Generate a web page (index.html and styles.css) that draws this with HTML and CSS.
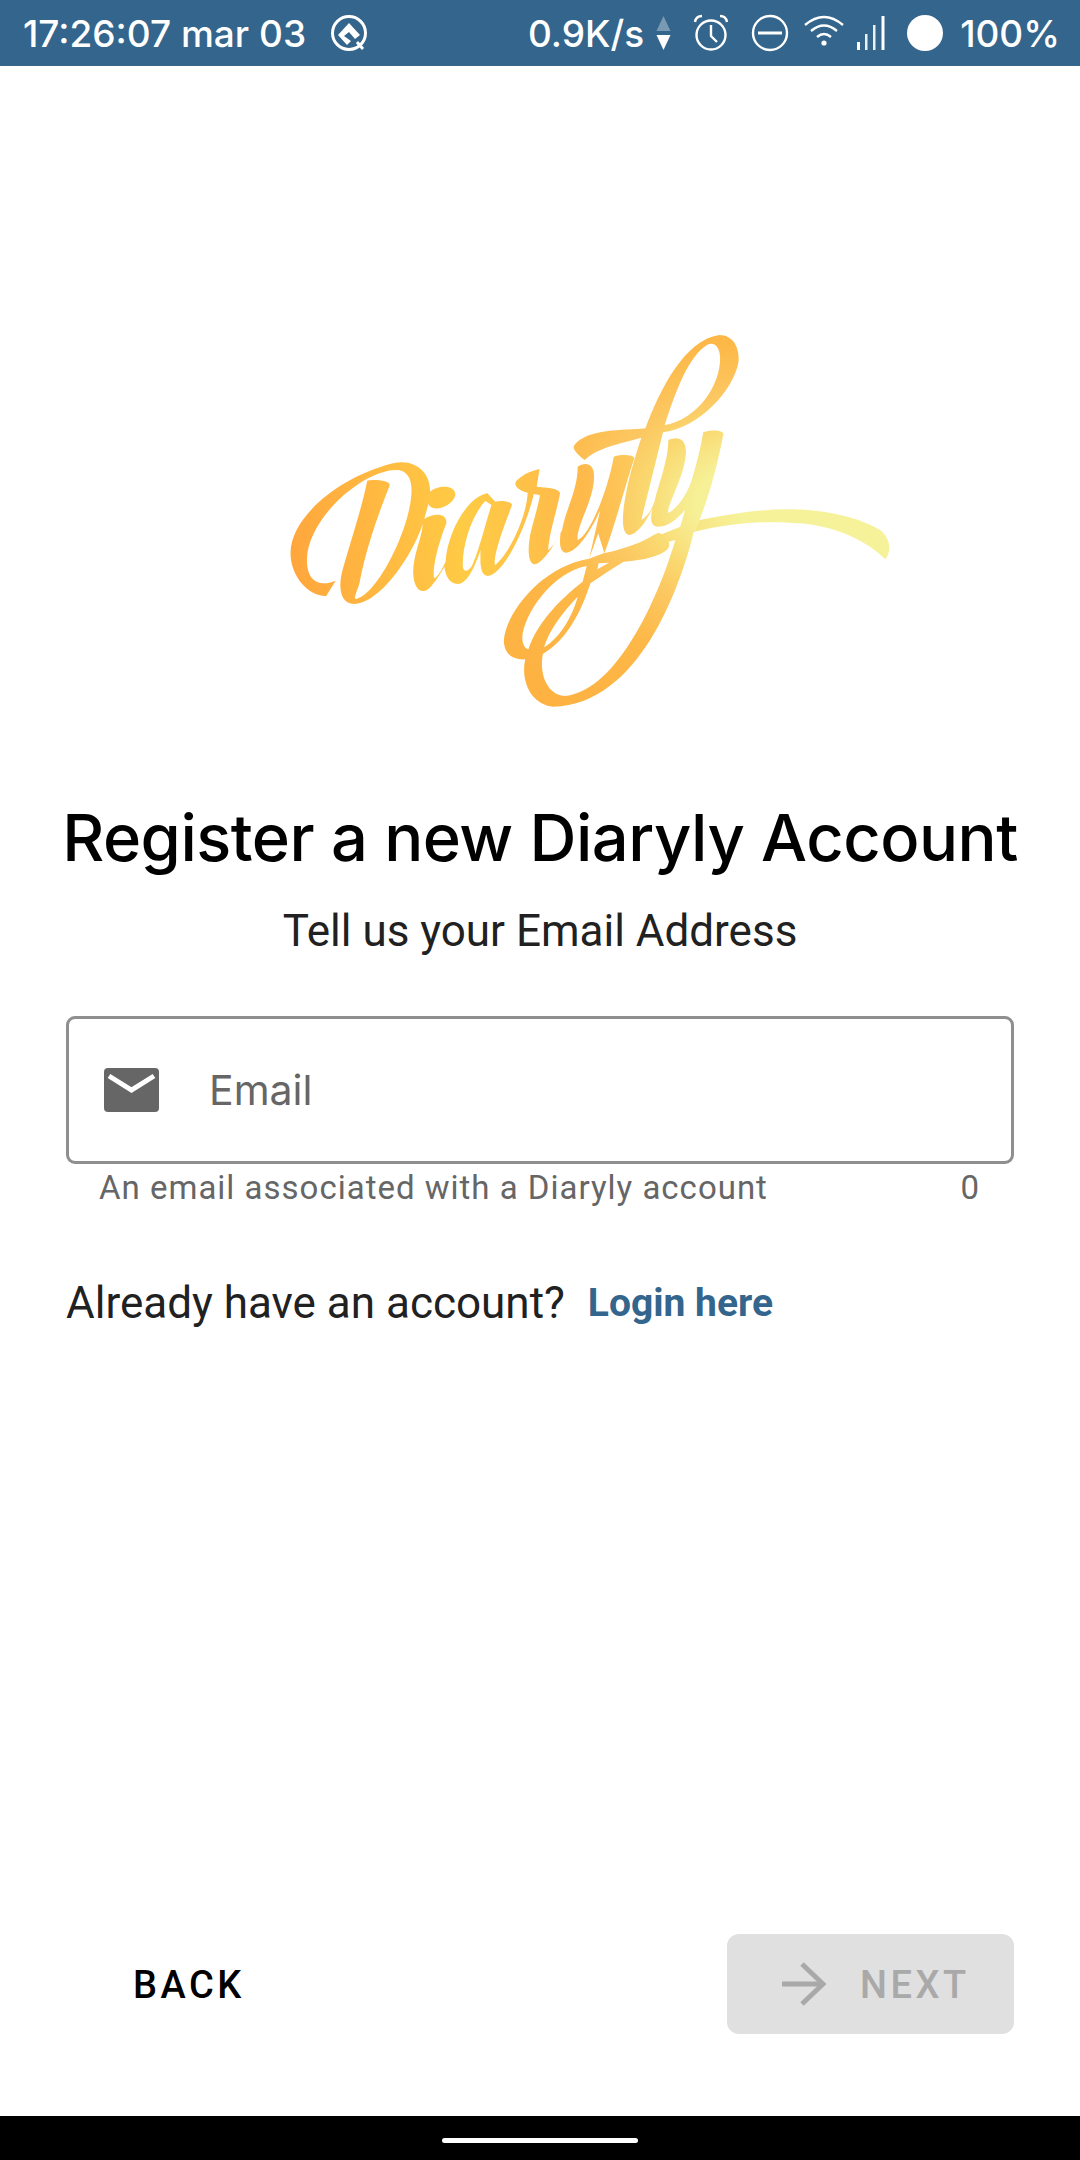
FILE: index.html
```html
<!DOCTYPE html>
<html lang="en">
<head>
  <meta charset="UTF-8" />
  <meta name="viewport" content="width=device-width, initial-scale=1.0"/>
  <title>Diaryly - Register</title>
  <link rel="stylesheet" href="styles.css">
</head>
<body>
  <div class="screen">
    <div class="statusbar">
      <div class="status-left">
        <span>17:26:07 mar 03</span>
        <svg class="ic-q" viewBox="0 0 38 38">
          <circle cx="19" cy="19" r="16.5" fill="none" stroke="#fff" stroke-width="3"/>
          <path d="M19 9 L30 21 L25 25 L19 18 L14 22 L21 27 L17 31 L8 21 Z" fill="#fff"/>
          <path d="M27 28 L33 35" stroke="#fff" stroke-width="3"/>
        </svg>
      </div>
      <div class="status-right">
        <span>0.9K/s</span>
        <svg class="ic-arrows" viewBox="0 0 15 34">
          <path d="M7.5 0 L14.5 15 H0.5 Z" fill="#fff" opacity="0.35"/>
          <path d="M0.5 19 H14.5 L7.5 34 Z" fill="#fff"/>
        </svg>
        <svg class="ic-alarm" viewBox="0 0 36 38" fill="none" stroke="#fff" stroke-width="2.4">
          <circle cx="18" cy="21" r="14.5"/>
          <path d="M18 11 V22 L24 28"/>
          <path d="M2 8 Q3 2 9 2 M27 2 Q33 2 34 8"/>
        </svg>
        <svg class="ic-dnd" viewBox="0 0 38 38" fill="none" stroke="#fff" stroke-width="2.4">
          <circle cx="19" cy="19" r="17"/>
          <path d="M7 19 H31" stroke-width="3"/>
        </svg>
        <svg class="ic-wifi" viewBox="0 0 40 32" fill="none" stroke="#fff" stroke-width="2.4">
          <path d="M1 11 Q20 -5 39 11"/>
          <path d="M7 17 Q20 6 33 17"/>
          <path d="M13 23 Q20 17 27 23"/>
          <circle cx="20" cy="29" r="2.6" fill="#fff" stroke="none"/>
        </svg>
        <svg class="ic-signal" viewBox="0 0 28 34" fill="#fff">
          <rect x="0" y="26" width="3" height="8"/>
          <rect x="8" y="18" width="2.5" height="16" opacity="0.9"/>
          <rect x="16" y="9" width="2.5" height="25" opacity="0.9"/>
          <rect x="24.500" y="0" width="3" height="34"/>
        </svg>
        <span class="battery-dot"></span>
        <span>100%</span>
      </div>
    </div>

    <div class="logo-wrap">
      <svg class="logo" viewBox="0 0 1560 1200" preserveAspectRatio="none" role="img" aria-label="Diaryly logo">
        <defs>
          <linearGradient id="warm" gradientUnits="userSpaceOnUse" x1="50" y1="700" x2="900" y2="640">
            <stop offset="0" stop-color="#ffa63d"/>
            <stop offset="0.5" stop-color="#ffcb45"/>
            <stop offset="0.85" stop-color="#feb94b"/>
            <stop offset="1" stop-color="#fdc95c"/>
          </linearGradient>
          <radialGradient id="swash" gradientUnits="userSpaceOnUse" cx="1150" cy="550" r="800">
            <stop offset="0.14" stop-color="#f6f096"/>
            <stop offset="0.22" stop-color="#f8e585"/>
            <stop offset="0.3" stop-color="#fad86f"/>
            <stop offset="0.4" stop-color="#fcc862"/>
            <stop offset="0.6" stop-color="#fdb847"/>
            <stop offset="1" stop-color="#fdb141"/>
          </radialGradient>
          <linearGradient id="tail" gradientUnits="userSpaceOnUse" x1="1000" y1="640" x2="1150" y2="600">
            <stop offset="0" stop-color="#f9e07c"/>
            <stop offset="1" stop-color="#f6f299"/>
          </linearGradient>
        </defs>
        <g fill="url(#warm)">
          <path d="M160 782 L137 828 C95 830 50 770 50 700 C50 590 170 470 300 430 C355 415 392 460 390 515 C405 497 452 490 452 525 C445 560 395 580 386 552 L376 597 C395 580 432 575 430 610 C410 670 395 745 400 775 C410 770 420 745 428 725 C432 640 480 530 530 520 L549 545 C565 540 590 545 590 555 C570 620 545 700 548 735 C575 715 625 600 628 518 C600 510 590 490 605 478 C620 460 640 452 657 447 L650 500 C670 503 705 503 707 520 C700 570 680 640 678 690 C690 680 702 655 712 630 C720 570 750 510 750 440 C765 428 790 425 790 470 C790 540 745 620 750 660 C775 650 820 530 838 410 C850 403 888 403 888 415 C860 520 840 620 815 700 L800 640 L778 716 L805 570 C780 640 745 700 720 698 C705 695 706 665 708 640 C690 680 665 730 645 733 C625 730 630 670 635 640 C645 590 660 530 657 525 L643 522 C625 620 570 765 530 768 C510 765 513 720 513 690 C500 740 480 792 458 792 C435 790 428 765 425 740 C410 770 390 815 372 813 C350 810 345 760 352 720 C358 680 372 640 372 612 C350 700 270 850 205 852 C170 850 165 800 178 745 C195 670 225 560 237 482 C255 477 292 482 292 495 C265 580 235 680 218 790 C212 815 205 830 208 837 C260 830 345 620 345 510 C345 470 330 448 305 450 C220 455 90 600 90 720 C90 790 125 800 160 782 Z"/>
          <path d="M525 543 C495 580 468 670 470 740 C472 760 487 755 495 730 C510 690 530 590 540 555 Z" fill="#fff"/>
        </g>
        <path fill="url(#swash)" fill-rule="evenodd" d="M915 325 C950 210 1010 60 1095 45 C1130 45 1145 85 1142 125 C1130 210 1050 320 958 337 L905 600 C920 590 930 570 937 545 C950 480 971 420 971 360 C990 350 1015 350 1014 400 C1010 470 970 550 970 578 C985 575 1015 530 1028 480 C1040 430 1050 385 1056 337 C1075 328 1105 330 1105 342 C1090 440 1072 520 1047 600 L1033 636 C1000 800 900 1155 690 1160 C640 1155 610 1090 622 1018 C590 1020 570 1000 570 960 C575 880 660 740 778 716 L813 700 C870 685 910 665 935 645 L947 638 L955 643 L1000 620 L1012 570 C990 600 970 620 947 620 C925 620 928 590 932 565 C920 600 895 645 875 645 C855 640 858 580 868 520 C875 470 890 410 905 353 C860 370 800 380 767 420 C750 405 735 385 742 375 C775 325 860 332 915 325 Z M962 316 C1050 295 1100 185 1097 110 C1095 75 1080 65 1065 75 C1020 110 990 210 962 316 Z M772 738 C690 755 620 880 615 950 C615 970 620 985 630 988 C650 910 705 840 762 785 Z M801 730 L826 728 L798 748 Z M750 830 C715 875 680 930 668 982 C710 950 738 885 750 830 Z M988 660 L972 665 C976 680 970 690 955 700 C930 715 900 722 862 725 C835 745 810 765 781 790 C760 870 725 960 665 1002 C655 1070 680 1128 720 1128 C850 1110 950 820 988 660 Z"/>
        <path fill="url(#tail)" d="M1033 636 C1150 600 1230 605 1290 610 C1390 620 1460 670 1500 718 C1512 700 1517 660 1487 630 C1425 585 1335 568 1260 568 C1180 568 1110 585 1047 600 Z"/>
      </svg>
    </div>

    <h1>Register a new Diaryly Account</h1>
    <p class="subtitle">Tell us your Email Address</p>

    <div class="field">
      <svg class="ic-mail" viewBox="0 0 55 44">
        <path d="M4 0 H51 Q55 0 55 4 V40 Q55 44 51 44 H4 Q0 44 0 40 V4 Q0 0 4 0 Z" fill="#666"/>
        <path d="M5 8 L27.500 22 L50 8" fill="none" stroke="#fff" stroke-width="5"/>
      </svg>
      <span class="placeholder">Email</span>
    </div>
    <div class="hint">
      <span>An email associated with a Diaryly account</span>
      <span>0</span>
    </div>

    <div class="login-row">
      <span>Already have an account?</span>
      <a class="login-link" href="#">Login here</a>
    </div>

    <div class="actions">
      <a class="btn-back" href="#">BACK</a>
      <a class="btn-next" href="#">
        <svg class="ic-next" viewBox="0 0 44 44" fill="none" stroke="#a9a9a9" stroke-width="5">
          <path d="M0 22 H41"/>
          <path d="M20 2 L41 22 L20 42"/>
        </svg>
        <span class="next-label">NEXT</span>
      </a>
    </div>

    <div class="navbar"><span class="nav-handle"></span></div>
  </div>
</body>
</html>
```

FILE: styles.css
```css
* {
  box-sizing: border-box;
}

body {
  margin: 0;
  background: #fff;
  font-family: Roboto, sans-serif;
}

.screen {
  width: 1080px;
  height: 2160px;
  display: flex;
  flex-direction: column;
  overflow: hidden;
}

.statusbar {
  height: 66px;
  background: #34658c;
  color: #fff;
  font-family: Inter, sans-serif;
  font-size: 37px;
  font-weight: 500;
  padding: 0 20px 0 23px;
  display: flex;
  align-items: center;
  justify-content: space-between;
  flex-shrink: 0;
}

.status-left,
.status-right {
  display: flex;
  align-items: center;
}

.ic-q {
  width: 38px;
  height: 38px;
  margin-left: 24px;
}

.ic-arrows {
  width: 15px;
  height: 34px;
  margin-left: 12px;
}

.ic-alarm {
  width: 36px;
  height: 38px;
  margin-left: 22px;
}

.ic-dnd {
  width: 38px;
  height: 38px;
  margin-left: 22px;
}

.ic-wifi {
  width: 40px;
  height: 32px;
  margin-left: 15px;
  margin-top: -6px;
}

.ic-signal {
  width: 28px;
  height: 34px;
  margin-left: 13px;
}

.battery-dot {
  width: 36px;
  height: 36px;
  border-radius: 50%;
  background: #fff;
  margin: 0 17px 0 22px;
}

.logo-wrap {
  padding: 254px 0 0 270px;
  height: 654px;
  margin-bottom: 83px;
  flex-shrink: 0;
}

.logo {
  display: block;
  width: 640px;
  height: 400px;
}

h1 {
  margin: 0;
  font-family: Inter, sans-serif;
  font-size: 65px;
  font-weight: 500;
  line-height: 70px;
  color: #000;
  text-align: center;
  letter-spacing: -0.5px;
}

.subtitle {
  margin: 33px 0 0;
  font-size: 44px;
  line-height: 50px;
  color: #212121;
  text-align: center;
}

.field {
  margin: 60px 66px 0;
  height: 148px;
  border: 3px solid #8f8f8f;
  border-radius: 9px;
  display: flex;
  align-items: center;
  padding-left: 35px;
  flex-shrink: 0;
}

.ic-mail {
  width: 55px;
  height: 44px;
}

.placeholder {
  margin-left: 50px;
  font-family: Inter, sans-serif;
  font-size: 41px;
  color: #666;
}

.hint {
  margin: 5px 66px 0 99px;
  padding-right: 34px;
  display: flex;
  justify-content: space-between;
  font-size: 33px;
  line-height: 38px;
  letter-spacing: 1px;
  color: #666;
}

.login-row {
  margin: 71px 0 0 66px;
  display: flex;
  align-items: center;
  font-size: 44px;
  line-height: 50px;
  color: #212121;
}

.login-link {
  margin-left: 23px;
  font-size: 39px;
  font-weight: 700;
  color: #34658c;
  text-decoration: none;
}

.actions {
  margin-top: auto;
  padding: 0 66px 0 133px;
  display: flex;
  align-items: center;
  justify-content: space-between;
}

.btn-back {
  padding-top: 2px;
  font-size: 38px;
  font-weight: 500;
  letter-spacing: 3.5px;
  color: #000;
  text-decoration: none;
}

.btn-next {
  width: 287px;
  height: 100px;
  border-radius: 12px;
  background: #e0e0e0;
  color: #a9a9a9;
  font-size: 38px;
  font-weight: 500;
  letter-spacing: 3.5px;
  text-decoration: none;
  display: flex;
  align-items: center;
  padding-left: 55px;
}

.next-label {
  padding-top: 2px;
}

.ic-next {
  width: 44px;
  height: 44px;
  margin-right: 34px;
}

.navbar {
  margin-top: 82px;
  height: 44px;
  background: #000;
  display: flex;
  justify-content: center;
  padding-top: 22px;
  flex-shrink: 0;
}

.nav-handle {
  width: 196px;
  height: 5px;
  border-radius: 3px;
  background: #fff;
}
```
